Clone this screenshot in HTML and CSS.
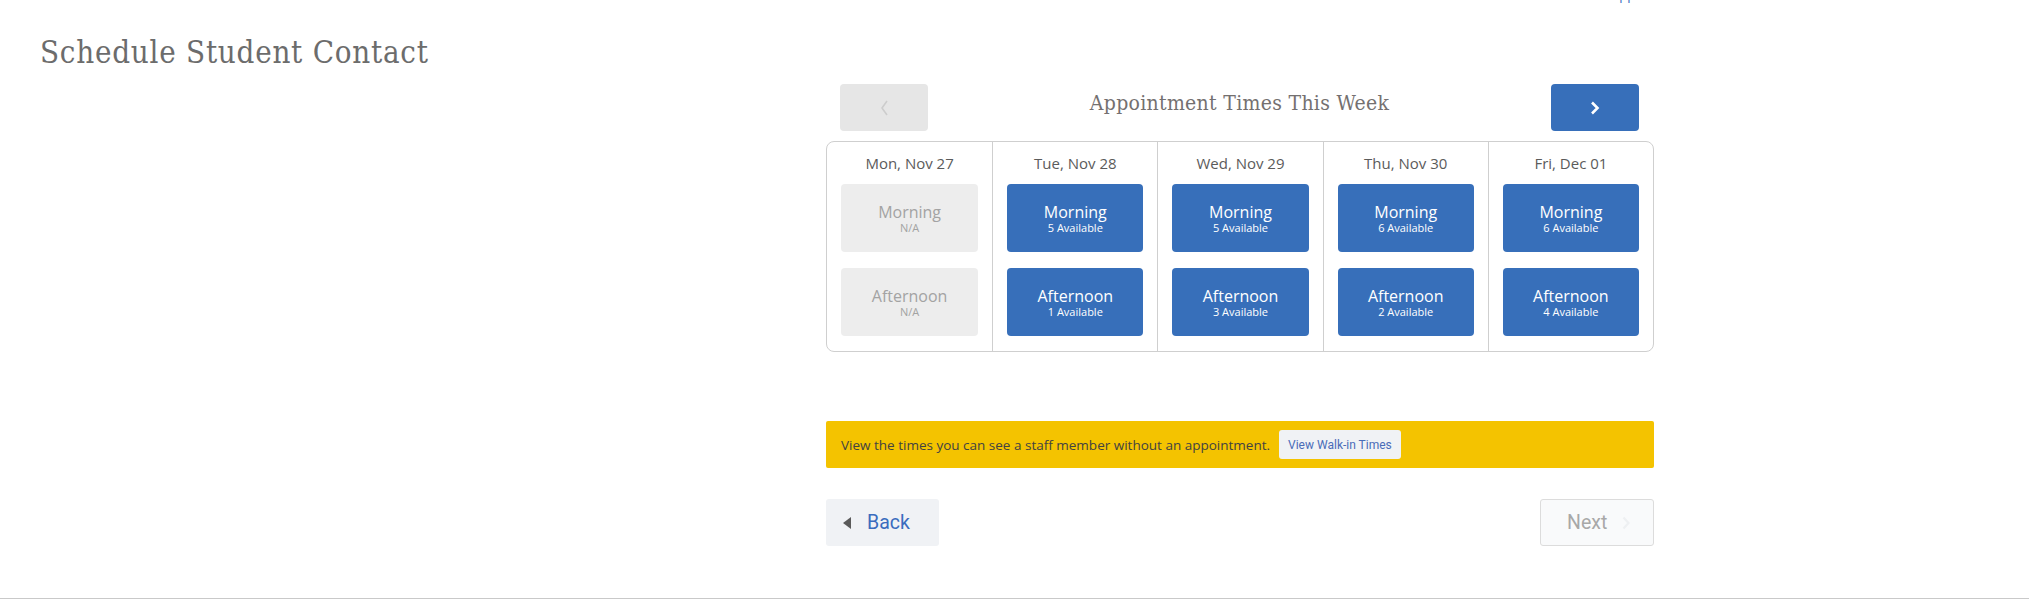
FILE: index.html
```html
<!DOCTYPE html>
<html lang="en">
<head>
<meta charset="utf-8">
<title>Schedule Student Contact</title>
<link rel="stylesheet" href="styles.css">
</head>
<body>
<div class="topbar"><a class="top-link" href="#">Support</a></div>
<div class="page">
  <div class="side">
    <h1 class="page-title">Schedule Student Contact</h1>
  </div>
  <main class="main">
    <div class="week-head">
      <button class="nav-btn nav-prev" type="button" aria-label="Previous week">
        <svg width="10" height="16" viewBox="0 0 10 16"><polyline points="8,1 3,8 8,15" fill="none" stroke="#cdcdcd" stroke-width="1.6"/></svg>
      </button>
      <div class="week-title">Appointment Times This Week</div>
      <button class="nav-btn nav-next" type="button" aria-label="Next week">
        <svg width="10" height="14" viewBox="0 0 10 14"><polyline points="2,1.5 7.5,7 2,12.5" fill="none" stroke="#ffffff" stroke-width="2.6"/></svg>
      </button>
    </div>

    <div class="week">
      <div class="day">
        <div class="day-label">Mon, Nov 27</div>
        <div class="slots">
          <div class="slot slot-off"><span class="slot-name">Morning</span><span class="slot-count">N/A</span></div>
          <div class="slot slot-off"><span class="slot-name">Afternoon</span><span class="slot-count">N/A</span></div>
        </div>
      </div>
      <div class="day">
        <div class="day-label">Tue, Nov 28</div>
        <div class="slots">
          <div class="slot"><span class="slot-name">Morning</span><span class="slot-count">5 Available</span></div>
          <div class="slot"><span class="slot-name">Afternoon</span><span class="slot-count">1 Available</span></div>
        </div>
      </div>
      <div class="day">
        <div class="day-label">Wed, Nov 29</div>
        <div class="slots">
          <div class="slot"><span class="slot-name">Morning</span><span class="slot-count">5 Available</span></div>
          <div class="slot"><span class="slot-name">Afternoon</span><span class="slot-count">3 Available</span></div>
        </div>
      </div>
      <div class="day">
        <div class="day-label">Thu, Nov 30</div>
        <div class="slots">
          <div class="slot"><span class="slot-name">Morning</span><span class="slot-count">6 Available</span></div>
          <div class="slot"><span class="slot-name">Afternoon</span><span class="slot-count">2 Available</span></div>
        </div>
      </div>
      <div class="day">
        <div class="day-label">Fri, Dec 01</div>
        <div class="slots">
          <div class="slot"><span class="slot-name">Morning</span><span class="slot-count">6 Available</span></div>
          <div class="slot"><span class="slot-name">Afternoon</span><span class="slot-count">4 Available</span></div>
        </div>
      </div>
    </div>

    <div class="walkin">
      <span class="walkin-text">View the times you can see a staff member without an appointment.</span>
      <button class="walkin-btn" type="button">View Walk-in Times</button>
    </div>

    <div class="actions">
      <button class="act-btn act-back" type="button">
        <svg width="9" height="12" viewBox="0 0 9 12"><polygon points="8,0 8,12 0,6" fill="#5a5a5a"/></svg>
        <span>Back</span>
      </button>
      <button class="act-btn act-next" type="button" disabled>
        <span>Next</span>
        <svg width="8" height="14" viewBox="0 0 8 14"><polyline points="1.5,1.5 6.5,7 1.5,12.5" fill="none" stroke="#eef0f2" stroke-width="2.2"/></svg>
      </button>
    </div>
  </main>
</div>
<div class="footer-line"></div>
</body>
</html>
```

FILE: styles.css
```css
* { box-sizing: border-box; }

body {
  margin: 0;
  background: #ffffff;
  font-family: "Open Sans", "Liberation Sans", sans-serif;
  color: #555555;
}

.topbar {
  height: 3px;
  overflow: hidden;
  display: flex;
  justify-content: flex-end;
  padding-right: 376px;
}

.top-link {
  font-size: 13px;
  line-height: 16px;
  margin-top: -13px;
  color: #3a6cbe;
  text-decoration: none;
}

.page {
  display: grid;
  grid-template-columns: 826px 828px;
}

.side {
  padding: 31px 0 0 40px;
}

.page-title {
  margin: 0;
  font-family: "DejaVu Serif Condensed", "DejaVu Serif", serif;
  font-weight: normal;
  font-size: 31px;
  line-height: 36px;
  color: #6c6c6c;
  letter-spacing: 0.75px;
}

.main {
  padding-top: 81px;
}

.week-head {
  display: flex;
  align-items: center;
  justify-content: space-between;
  height: 47px;
  padding: 0 15px 0 14px;
}

.nav-btn {
  width: 88px;
  height: 47px;
  border: 0;
  border-radius: 4px;
  display: flex;
  align-items: center;
  justify-content: center;
  padding: 0;
}

.nav-prev { background: #e6e6e6; }
.nav-next { background: #376fba; }

.week-title {
  font-family: "DejaVu Serif Condensed", "DejaVu Serif", serif;
  font-size: 21px;
  letter-spacing: 0.3px;
  color: #747070;
  margin-top: -10px;
}

.week {
  margin-top: 10px;
  display: grid;
  grid-template-columns: repeat(5, 1fr);
  border: 1px solid #cfcfcf;
  border-radius: 8px;
}

.day {
  padding: 0 14px 15px;
}

.day + .day {
  border-left: 1px solid #cfcfcf;
}

.day-label {
  text-align: center;
  font-size: 15px;
  line-height: 20px;
  padding: 11px 0 11px;
  color: #5b5b5b;
}

.slots {
  display: flex;
  flex-direction: column;
  gap: 16px;
}

.slot {
  height: 68px;
  border-radius: 4px;
  background: #376fba;
  color: #ffffff;
  display: flex;
  flex-direction: column;
  align-items: center;
  justify-content: center;
}

.slot-off {
  background: #ededed;
  color: #a3a3a3;
}

.slot-name {
  font-size: 16px;
  line-height: 18px;
}

.slot-count {
  font-size: 11px;
  line-height: 13px;
}

.walkin {
  margin-top: 69px;
  height: 47px;
  background: #f4c300;
  border-radius: 2px;
  display: flex;
  align-items: center;
  padding: 0 15px;
  gap: 9px;
}

.walkin-text {
  font-size: 13.5px;
  color: #424242;
}

.walkin-btn {
  height: 29px;
  border: 0;
  border-radius: 3px;
  background: #f0f2f5;
  color: #4a6cb8;
  font-family: Roboto, "Liberation Sans", sans-serif;
  font-size: 12px;
  padding: 0 9px;
}

.actions {
  margin-top: 31px;
  display: flex;
  justify-content: space-between;
  align-items: center;
}

.act-btn {
  height: 47px;
  border-radius: 3px;
  display: flex;
  align-items: center;
  font-family: Roboto, "Liberation Sans", sans-serif;
  font-size: 19.5px;
}

.act-back {
  width: 113px;
  border: 0;
  background: #f0f2f5;
  color: #3a6cbe;
  padding: 0 0 0 17px;
  gap: 15px;
}

.act-next {
  width: 114px;
  border: 1px solid #dcdcdc;
  background: #f9fafb;
  color: #a8a8a8;
  padding: 0 0 0 26px;
  gap: 15px;
}

.footer-line {
  margin-top: 52px;
  border-top: 1px solid #c9c9c9;
}
```
